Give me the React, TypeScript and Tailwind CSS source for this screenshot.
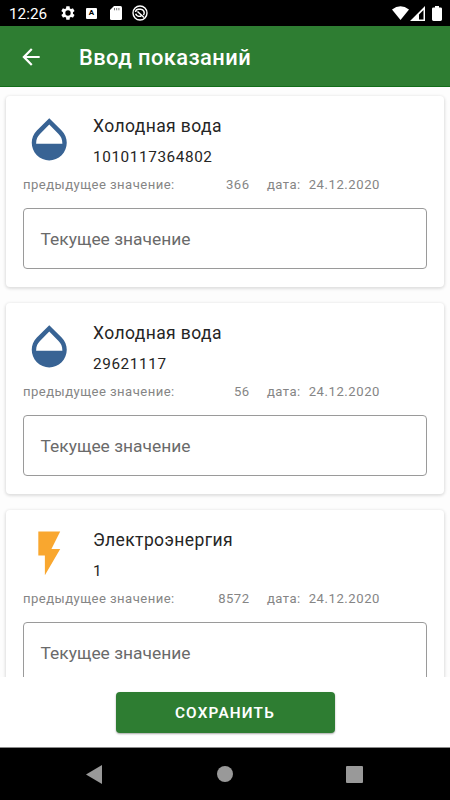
type Meter = { kind: 'water' | 'power'; title: string; serial: string; previous: string };

const meters: Meter[] = [
  { kind: 'water', title: 'Холодная вода', serial: '1010117364802', previous: '366' },
  { kind: 'water', title: 'Холодная вода', serial: '29621117', previous: '56' },
  { kind: 'power', title: 'Электроэнергия', serial: '1', previous: '8572' },
];

function MeterIcon({ kind }: { kind: Meter['kind'] }) {
  return kind === 'water' ? (
    <svg viewBox="0 0 24 24" className="size-[52.5px] shrink-0 fill-[#386394]">
      <path d="M17.66 8L12 2.35 6.34 8C4.78 9.56 4 11.64 4 13.64s.78 4.11 2.34 5.67 3.61 2.35 5.66 2.35 4.1-.79 5.66-2.35S20 15.64 20 13.64 19.22 9.56 17.66 8zM6 14c.01-2 .62-3.27 1.76-4.4L12 5.27l4.24 4.38C17.38 10.77 17.99 12 18 14H6z" />
    </svg>
  ) : (
    <svg viewBox="0 0 24 24" className="size-[52.5px] shrink-0 fill-[#f9a72f]">
      <path d="M7 2v11h3v9l7-12h-4l4-8z" />
    </svg>
  );
}

function MeterCard({ meter }: { meter: Meter }) {
  return (
    <section className="h-[191px] shrink-0 rounded-[4px] bg-white px-[17px] pt-[17px] shadow-[0_1px_3px_1px_rgba(0,0,0,0.12)]">
      <div className="flex h-[62px]">
        <MeterIcon kind={meter.kind} />
        <div className="ml-[17.5px] text-[#252525]">
          <h2 className="mt-px text-[17.5px] leading-[24px] tracking-[0.4px]">{meter.title}</h2>
          <p className="mt-[7px] text-[15.3px] leading-[24px] tracking-[0.6px]">{meter.serial}</p>
        </div>
      </div>
      <div className="flex h-[20px] items-center text-[13.1px] leading-[20px] tracking-[0.45px] text-[#858585]">
        <span className="w-[160px] whitespace-nowrap">предыдущее значение:</span>
        <span className="w-[66.5px] text-right">{meter.previous}</span>
        <span className="ml-[17.5px]">дата:</span>
        <span className="ml-[8px] tracking-[0.55px]">24.12.2020</span>
      </div>
      <div className="mt-[13px] flex h-[61px] items-center rounded-[4px] border border-[#9a9a9a] px-[16.5px] pt-px text-[17.4px] text-[#6a6a6a]">
        Текущее значение
      </div>
    </section>
  );
}

function StatusBar() {
  return (
    <div className="flex h-[26px] items-center bg-black text-white">
      <span className="ml-[9px] w-[51px] pt-[2px] text-[15.3px]">12:26</span>
      <svg viewBox="0 0 24 24" className="size-[16px] fill-white">
        <path fillRule="evenodd" d="M19.4 13c.1-.3.1-.7.1-1s0-.7-.1-1l2.1-1.6c.2-.2.2-.4.1-.6l-2-3.5c-.1-.2-.4-.3-.6-.2l-2.5 1c-.5-.4-1.1-.7-1.7-1L14.4 2.4c0-.2-.2-.4-.5-.4h-4c-.2 0-.5.2-.5.4L9 5.1c-.6.3-1.2.6-1.7 1l-2.5-1c-.2-.1-.5 0-.6.2l-2 3.5c-.1.2-.1.5.1.6L4.5 11c-.1.3-.1.7-.1 1s0 .7.1 1l-2.1 1.6c-.2.1-.3.4-.1.6l2 3.5c.1.2.4.3.6.2l2.5-1c.5.4 1.1.7 1.7 1l.3 2.7c0 .2.3.4.5.4h4c.3 0 .5-.2.5-.4l.4-2.7c.6-.3 1.2-.6 1.7-1l2.5 1c.2.1.5 0 .6-.2l2-3.5c.1-.2.1-.5-.1-.6zM12 16a4 4 0 1 1 0-8 4 4 0 0 1 0 8z" />
      </svg>
      <span className="ml-[10px] flex size-[11px] items-center justify-center rounded-[1px] bg-white text-[8px] font-bold leading-none text-black">A</span>
      <svg viewBox="0 0 12 14" className="ml-[13px] h-[14px] w-[12px]">
        <path fill="white" d="M4 0h6.5Q12 0 12 1.5v11Q12 14 10.5 14h-9Q0 14 0 12.5V4z" />
        <path stroke="#777" d="M4.5 2v2.3M6.7 2v2.3M8.900 2v2.3" />
      </svg>
      <svg viewBox="0 0 16 16" className="ml-[9.5px] size-[16px]" fill="none" stroke="white">
        <circle cx="8" cy="8" r="7" strokeWidth="1.4" />
        <path strokeWidth="1.5" d="M3.5 7a3.2 3.2 0 0 1 3.300-2.700h2a3.600 3.600 0 0 1 2.700 5.800M5.500 6.500l6.500 6M3.600 8.700c1 2.300 3.500 3.200 5.600 2.300" />
      </svg>
      <svg viewBox="0 0 17 14" className="ml-auto h-[14px] w-[17px] fill-white">
        <path d="M0 3.5Q8.5-3 17 3.5L8.5 14z" />
      </svg>
      <svg viewBox="0 0 15 15" className="ml-px h-[15px] w-[15px] fill-white">
        <path fillRule="evenodd" d="M0 15L15 0v15zM9 8.5v5h4.5V4z" />
      </svg>
      <svg viewBox="0 0 10 16" className="ml-[7px] mr-[8px] h-[15px] w-[10px] fill-white" preserveAspectRatio="none">
        <path d="M3 0h4v1.5h1.5Q10 1.5 10 3v11.5Q10 16 8.5 16h-7Q0 16 0 14.5V3q0-1.5 1.5-1.5H3z" />
      </svg>
    </div>
  );
}

export default function App() {
  return (
    <div className="flex h-[800px] w-[450px] flex-col overflow-hidden bg-white font-['Roboto','Noto_Sans',sans-serif]">
      <StatusBar />
      <header className="flex h-[61px] shrink-0 items-center border-b border-[#126d19] bg-[#2e7d32] pl-[18px] text-white">
        <svg viewBox="0 0 24 24" className="mt-px size-[26px] fill-white">
          <path d="M20 11H7.83l5.59-5.59L12 4l-8 8 8 8 1.41-1.41L7.83 13H20v-2z" />
        </svg>
        <h1 className="ml-[35px] mt-[5px] text-[21.9px] font-medium tracking-[0.42px]">Ввод показаний</h1>
      </header>
      <main className="flex h-[590px] shrink-0 flex-col gap-[16px] overflow-hidden bg-[#fdfdfd] px-[6px] pt-[9px]">
        {meters.map((meter) => (
          <MeterCard key={meter.title + meter.serial} meter={meter} />
        ))}
      </main>
      <footer className="flex h-[71px] shrink-0 justify-center border-b border-[#8a8a8a] pt-[15px]">
        <button className="h-[41px] w-[219px] rounded-[4px] bg-[#2e7d32] pt-[2px] text-[15.3px] font-semibold tracking-[1.2px] text-white shadow-[0_1px_2px_rgba(0,0,0,0.35)]">
          СОХРАНИТЬ
        </button>
      </footer>
      <nav className="flex h-[52px] shrink-0 items-center bg-black">
        <svg viewBox="0 0 16 19" className="ml-[86px] h-[19px] w-[16px] fill-[#999]">
          <path d="M16 0v19L0 9.5z" />
        </svg>
        <span className="ml-[115px] size-[16px] rounded-full bg-[#999]" />
        <span className="ml-[113px] size-[17px] rounded-[1px] bg-[#999]" />
      </nav>
    </div>
  );
}
